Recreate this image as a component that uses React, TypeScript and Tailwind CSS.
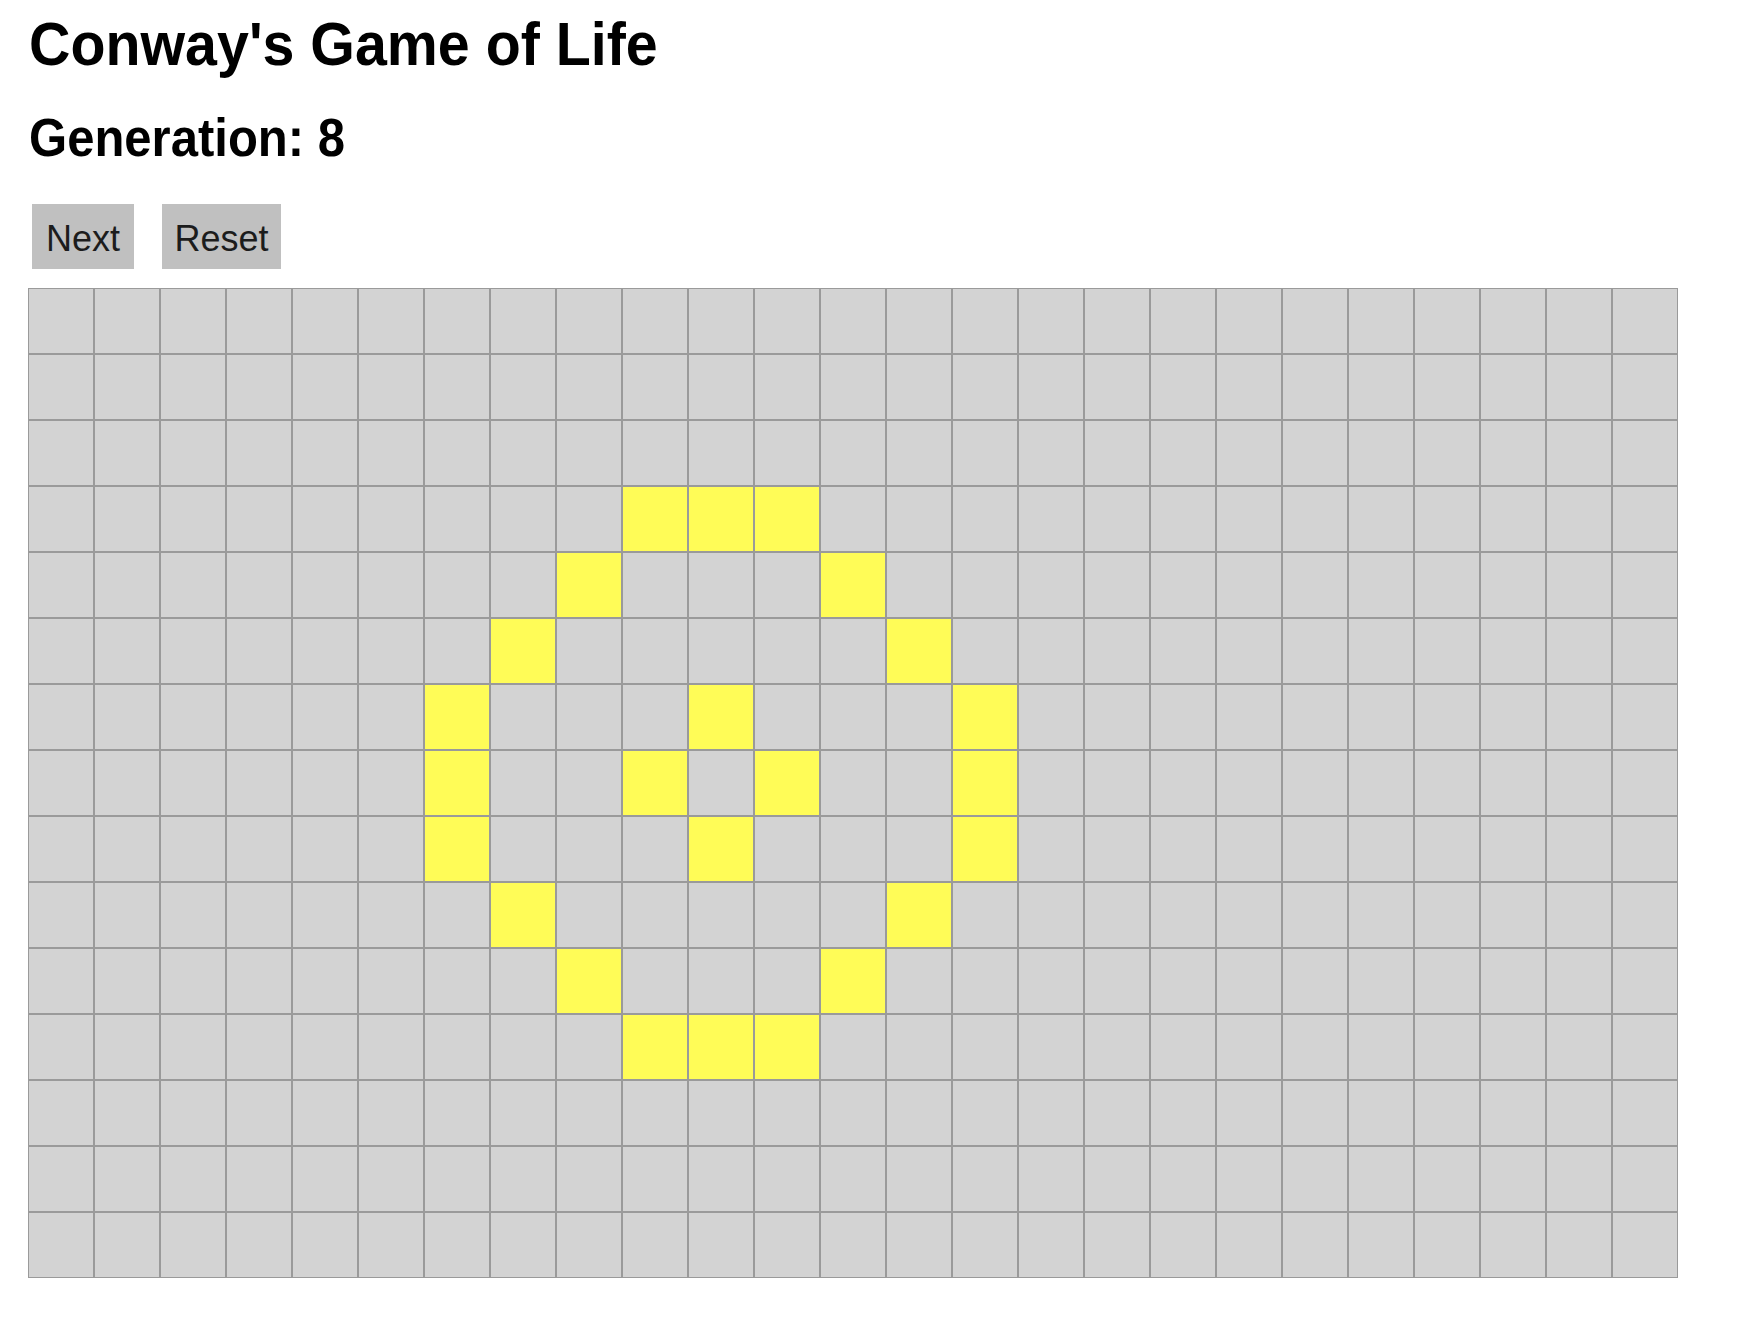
import React, { useState } from 'react';

const ROWS = 15;
const COLS = 25;

// generation 8 of the pattern shown
const LIVE: [number, number][] = [
  [3, 9], [3, 10], [3, 11],
  [4, 8], [4, 12],
  [5, 7], [5, 13],
  [6, 6], [6, 10], [6, 14],
  [7, 6], [7, 9], [7, 11], [7, 14],
  [8, 6], [8, 10], [8, 14],
  [9, 7], [9, 13],
  [10, 8], [10, 12],
  [11, 9], [11, 10], [11, 11],
];

const makeBoard = () => {
  const board: boolean[][] = Array.from({ length: ROWS }, () => Array(COLS).fill(false));
  LIVE.forEach(([r, c]) => {
    board[r][c] = true;
  });
  return board;
};

const step = (board: boolean[][]) =>
  board.map((row, r) =>
    row.map((alive, c) => {
      let n = 0;
      for (let dr = -1; dr <= 1; dr++) {
        for (let dc = -1; dc <= 1; dc++) {
          if (!dr && !dc) continue;
          if (board[r + dr]?.[c + dc]) n++;
        }
      }
      return alive ? n === 2 || n === 3 : n === 3;
    }),
  );

const App = () => {
  const [board, setBoard] = useState<boolean[][]>(makeBoard);
  const [generation, setGeneration] = useState<number>(8);

  return (
    <div className="min-h-screen bg-white pt-[13px] text-black font-['Liberation_Sans',sans-serif]">
      <h1 className="ml-[29px] text-[62px] leading-[62px] font-bold whitespace-nowrap">
        <span className="inline-block origin-left scale-x-[0.925]">Conway's Game of Life</span>
      </h1>
      <h2 className="ml-[29px] mt-[36px] text-[53px] leading-[53px] font-bold whitespace-nowrap">
        <span className="inline-block origin-left scale-x-[0.925]">Generation: {generation}</span>
      </h2>
      <div className="ml-[32px] mt-[40px] flex gap-[28px]">
        <button
          className="flex h-[65px] w-[102px] items-center justify-center bg-[#c0c0c0] pt-[5px] text-[36px] leading-[36px] text-[#1c1c1c]"
          onClick={() => {
            setBoard(step(board));
            setGeneration(generation + 1);
          }}
        >
          Next
        </button>
        <button
          className="flex h-[65px] w-[119px] items-center justify-center bg-[#c0c0c0] pt-[5px] text-[36px] leading-[36px] text-[#1c1c1c]"
          onClick={() => {
            setBoard(makeBoard());
            setGeneration(8);
          }}
        >
          Reset
        </button>
      </div>
      <div className="ml-[28px] mt-[19px] grid w-fit grid-cols-[repeat(25,66px)]">
        {board.map((row, r) =>
          row.map((alive, c) => (
            <div
              key={`${r}-${c}`}
              className={
                alive
                  ? 'h-[66px] border border-[#9a9a9a] bg-[#fffc57]'
                  : 'h-[66px] border border-[#9a9a9a] bg-[#d3d3d3]'
              }
            />
          )),
        )}
      </div>
    </div>
  );
};

export default App;
